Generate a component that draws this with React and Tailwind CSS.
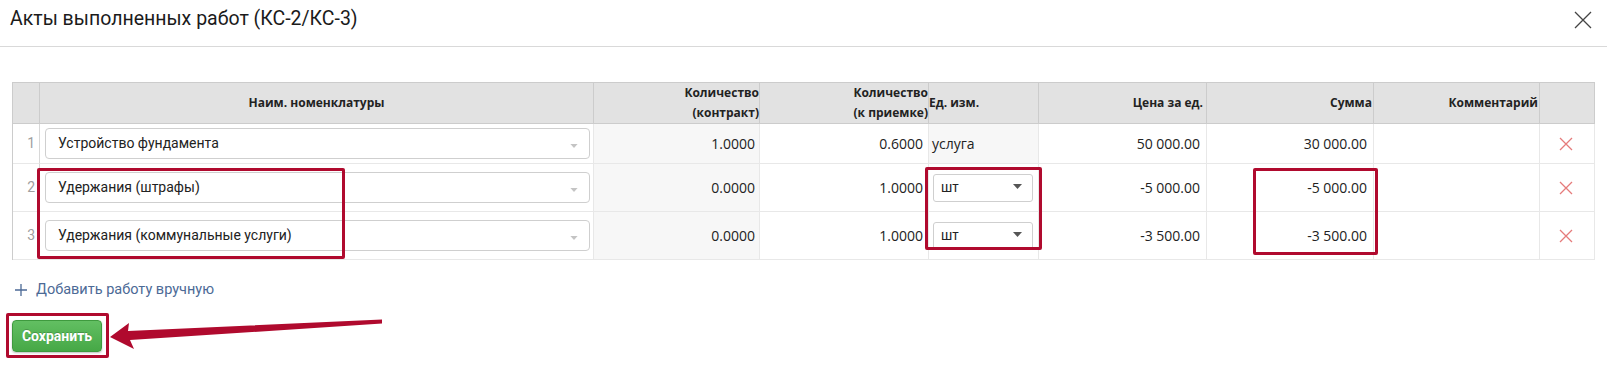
import React from "react";

const cols = "grid-cols-[27px_554px_166px_169px_110px_168px_167px_166px_55px]";

function Caret({ className }) {
  return (
    <svg width="9" height="5" viewBox="0 0 9 5" className={className}>
      <path d="M0 0 L9 0 L4.5 5 Z" fill="currentColor" />
    </svg>
  );
}

function NameSelect({ text }) {
  return (
    <div className="h-[31px] w-full bg-white border border-[#cfcfcf] rounded-[4px] flex items-center justify-between pl-[12px] pr-[11px]">
      <span className="text-[14px] text-[#222] font-['Roboto',sans-serif]">{text}</span>
      <Caret className="text-[#c4c4c4] mt-[4px] w-[8px] h-[4px]" />
    </div>
  );
}

function UnitSelect() {
  return (
    <div className="h-[28px] w-[100px] bg-white border border-[#cfcfcf] rounded-[3px] flex items-start justify-between pl-[7px] pr-[10px] pt-[2px]">
      <span className="text-[14px] text-[#222] font-['Liberation_Sans',sans-serif] leading-[20px]">шт</span>
      <Caret className="text-[#555] mt-[7px]" />
    </div>
  );
}

function DelIcon() {
  return (
    <svg width="14" height="14" viewBox="0 0 14 14">
      <path d="M1 1 L13 13 M13 1 L1 13" stroke="#e57b7b" strokeWidth="1.3" fill="none" />
    </svg>
  );
}

const rows = [
  { n: 1, name: "Устройство фундамента", qc: "1.0000", qa: "0.6000", unit: null, price: "50 000.00", sum: "30 000.00", h: "h-[40px]" },
  { n: 2, name: "Удержания (штрафы)", qc: "0.0000", qa: "1.0000", unit: "шт", price: "-5 000.00", sum: "-5 000.00", h: "h-[48px]" },
  { n: 3, name: "Удержания (коммунальные услуги)", qc: "0.0000", qa: "1.0000", unit: "шт", price: "-3 500.00", sum: "-3 500.00", h: "h-[48px]" },
];

export default function App() {
  const hc = "h-[41px] border-r border-b border-[#cccccc] bg-[#e2e2e2] flex items-center text-[12px] font-bold text-[#222] font-['Open_Sans',sans-serif] leading-[20px]";
  const bc = "border-r border-b border-[#e8e8e8] flex items-center text-[14px] text-[#222] font-['Open_Sans',sans-serif]";
  return (
    <div className="relative w-[1607px] h-[370px] bg-white overflow-hidden">
      <div className="h-[47px] border-b border-[#d9d9d9] flex items-center justify-between pl-[10px] pr-[15px]">
        <h1 className="text-[19.5px] text-[#1b1b1b] font-['Roboto',sans-serif] font-normal leading-none -mt-[8px]">
          Акты выполненных работ (КС-2/КС-3)
        </h1>
        <svg width="18" height="18" viewBox="0 0 18 18" className="-mt-[6px]">
          <path d="M1 1 L17 17 M17 1 L1 17" stroke="#444" strokeWidth="1.3" fill="none" />
        </svg>
      </div>

      <div className={`ml-[12px] mt-[35px] w-[1583px] border-l border-t border-[#cccccc] grid ${cols}`}>
        <div className={hc}></div>
        <div className={`${hc} justify-center`}>Наим. номенклатуры</div>
        <div className={`${hc} justify-end text-right`}>Количество<br />(контракт)</div>
        <div className={`${hc} justify-end text-right`}>Количество<br />(к приемке)</div>
        <div className={`${hc} justify-start`}>Ед. изм.</div>
        <div className={`${hc} justify-end pr-[3px]`}>Цена за ед.</div>
        <div className={`${hc} justify-end pr-[1px]`}>Сумма</div>
        <div className={`${hc} justify-end pr-[1px]`}>Комментарий</div>
        <div className={hc}></div>

        {rows.map((r) => (
          <React.Fragment key={r.n}>
            <div className={`${bc} ${r.h} justify-end pr-[4px] text-[#a0a0a0] text-[13px] border-r-[#d8d8d8] font-['Roboto',sans-serif]`}>{r.n}</div>
            <div className={`${bc} ${r.h} pl-[5px] pr-[3px]`}>
              <NameSelect text={r.name} />
            </div>
            <div className={`${bc} ${r.h} justify-end pr-[4px] bg-[#f7f7f7]`}>{r.qc}</div>
            <div className={`${bc} ${r.h} justify-end pr-[5px]`}>{r.qa}</div>
            {r.unit ? (
              <div className={`${bc} ${r.h} pl-[4px] items-center`}>
                <UnitSelect />
              </div>
            ) : (
              <div className={`${bc} ${r.h} pl-[3px] bg-[#f7f7f7] font-['Liberation_Sans',sans-serif]`}>услуга</div>
            )}
            <div className={`${bc} ${r.h} justify-end pr-[6px]`}>{r.price}</div>
            <div className={`${bc} ${r.h} justify-end pr-[6px]`}>{r.sum}</div>
            <div className={`${bc} ${r.h}`}></div>
            <div className={`${bc} ${r.h} justify-center pr-[2px]`}>
              <DelIcon />
            </div>
          </React.Fragment>
        ))}
      </div>

      <div className="mt-[20px] ml-[15px] flex items-center gap-[9px] h-[20px] text-[#4c6a96] font-['Roboto',sans-serif]">
        <svg width="12" height="12" viewBox="0 0 12 12">
          <path d="M6 0 V12 M0 6 H12" stroke="#4c6a96" strokeWidth="1.3" fill="none" />
        </svg>
        <span className="text-[14.5px]">Добавить работу вручную</span>
      </div>

      <div className="mt-[20px] ml-[12px]">
        <button className="h-[32px] w-[90px] rounded-[4px] border border-[#3e9a3e] bg-gradient-to-b from-[#62bf62] to-[#46a846] text-white text-[14px] font-bold font-['Roboto',sans-serif] shadow-[0_1px_2px_rgba(0,0,0,0.25)] [text-shadow:0_-1px_0_rgba(0,0,0,0.2)]">
          Сохранить
        </button>
      </div>

      {/* red annotation boxes */}
      <div className="absolute left-[37px] top-[168px] w-[308px] h-[91px] border-[3px] border-[#b00a2e] rounded-[2px] pointer-events-none"></div>
      <div className="absolute left-[925px] top-[167px] w-[117px] h-[83px] border-[3px] border-[#b00a2e] rounded-[2px] pointer-events-none"></div>
      <div className="absolute left-[1253px] top-[168px] w-[125px] h-[87px] border-[3px] border-[#b00a2e] rounded-[2px] pointer-events-none"></div>
      <div className="absolute left-[6px] top-[313px] w-[103px] h-[45px] border-[3px] border-[#b00a2e] rounded-[2px] pointer-events-none"></div>

      <svg className="absolute left-0 top-0 pointer-events-none" width="1607" height="370">
        <polygon
          points="110,337 129,323 128,331 382,319.5 382,323.5 130,340 134,349"
          fill="#b00a2e"
        />
      </svg>
    </div>
  );
}
